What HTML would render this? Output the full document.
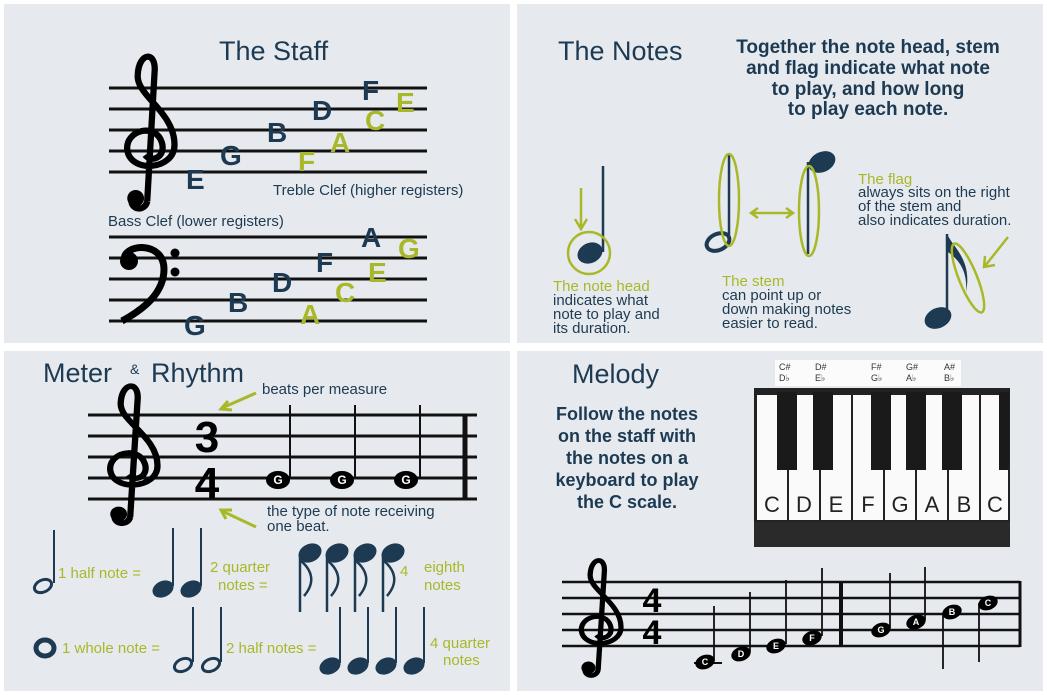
<!DOCTYPE html>
<html><head><meta charset="utf-8"><style>
html,body{margin:0;padding:0;background:#fff;}
svg{display:block}
text{font-family:"Liberation Sans",sans-serif}
.n{fill:#1d3a52}.g{fill:#a9b829}
.h{font-size:27px;fill:#1d3a52}
.L text{font-weight:bold;font-size:28px}
.s{font-size:15px;fill:#1d3a52}
.gs{font-size:15px;fill:#a9b829}
.b{font-weight:bold;fill:#1d3a52}
</style></head><body>
<svg width="1047" height="695" viewBox="0 0 1047 695" xmlns="http://www.w3.org/2000/svg">
<defs>
<g id="tc"><path d="M24 145 L31 20 C33 -2 16 0 15 22 C13 42 50 58 50 90 C50 115 8 118 5 95 C3 76 32 68 38 88 C42 102 28 108 22 100 M24 145 C22 155 8 154 9 143" fill="none" stroke="#000" stroke-width="6"/><circle cx="13" cy="142" r="8"/></g>
<g id="bc"><path d="M4 15 C4 -2 44 -4 44 24 C44 48 24 64 2 76" fill="none" stroke="#000" stroke-width="7"/><circle cx="9" cy="16" r="9"/><circle cx="55" cy="8" r="4.5"/><circle cx="55" cy="27" r="4.5"/></g>
</defs>
<rect width="1047" height="695" fill="#fff"/>
<rect x="4" y="4" width="506" height="339" fill="#e6eaee"/>
<rect x="517" y="4" width="526" height="339" fill="#e6eaee"/>
<rect x="4" y="351" width="506" height="340" fill="#e6eaee"/>
<rect x="517" y="351" width="526" height="340" fill="#e6eaee"/>

<text x="219" y="60" class="h">The Staff</text>
<g stroke="#111" stroke-width="3"><line x1="109" y1="88" x2="427" y2="88"/><line x1="109" y1="109" x2="427" y2="109"/><line x1="109" y1="130" x2="427" y2="130"/><line x1="109" y1="151" x2="427" y2="151"/><line x1="109" y1="172" x2="427" y2="172"/>
<line x1="109" y1="237" x2="427" y2="237"/><line x1="109" y1="258" x2="427" y2="258"/><line x1="109" y1="279" x2="427" y2="279"/><line x1="109" y1="300" x2="427" y2="300"/><line x1="109" y1="321" x2="427" y2="321"/></g>
<use href="#tc" transform="translate(122,52) scale(1.05,1.03)"/>
<use href="#bc" transform="translate(120,245)"/>
<g class="L">
<text x="186" y="189" class="n" font-weight="bold">E</text><text x="220" y="165" class="n" font-weight="bold">G</text><text x="267" y="142" class="n" font-weight="bold">B</text><text x="312" y="120" class="n" font-weight="bold">D</text><text x="362" y="100" class="n" font-weight="bold">F</text>
<text x="298" y="171" class="g" font-weight="bold">F</text><text x="330" y="152" class="g" font-weight="bold">A</text><text x="365" y="130" class="g" font-weight="bold">C</text><text x="396" y="112" class="g" font-weight="bold">E</text>
<text x="184" y="335" class="n" font-weight="bold">G</text><text x="228" y="312" class="n" font-weight="bold">B</text><text x="272" y="292" class="n" font-weight="bold">D</text><text x="316" y="272" class="n" font-weight="bold">F</text><text x="361" y="247" class="n" font-weight="bold">A</text>
<text x="300" y="324" class="g" font-weight="bold">A</text><text x="335" y="302" class="g" font-weight="bold">C</text><text x="368" y="282" class="g" font-weight="bold">E</text><text x="398" y="258" class="g" font-weight="bold">G</text>
</g>
<text x="273" y="195" class="s">Treble Clef (higher registers)</text>
<text x="108" y="226" class="s">Bass Clef (lower registers)</text>

<text x="558" y="60" class="h">The Notes</text>
<g class="b" font-size="19" text-anchor="middle"><text x="868" y="53">Together the note head, stem</text><text x="868" y="74">and flag indicate what note</text><text x="868" y="95">to play, and how long</text><text x="868" y="115">to play each note.</text></g>
<line x1="603" y1="166" x2="603" y2="252" stroke="#1d3a52" stroke-width="2.5"/>
<ellipse cx="590" cy="253" rx="13" ry="10" transform="rotate(-25 590 253)" class="n"/>
<circle cx="589" cy="253" r="21" fill="none" stroke="#a9b829" stroke-width="2.5"/>
<path d="M581 188 V228 M575 219 L581 229 L587 219" stroke="#a9b829" stroke-width="2.5" fill="none"/>
<text x="553" y="291" class="gs">The note head</text>
<text x="553" y="305" class="s">indicates what</text><text x="553" y="319" class="s">note to play and</text><text x="553" y="333" class="s">its duration.</text>
<line x1="729" y1="155" x2="729" y2="236" stroke="#1d3a52" stroke-width="2.5"/>
<ellipse cx="718" cy="242" rx="12" ry="8" transform="rotate(-25 718 242)" fill="none" stroke="#1d3a52" stroke-width="4"/>
<ellipse cx="729" cy="200" rx="10" ry="46" fill="none" stroke="#a9b829" stroke-width="2.5"/>
<path d="M752 213 H792 M758 208 L751 213 L758 218 M786 208 L793 213 L786 218" stroke="#a9b829" stroke-width="2.5" fill="none"/>
<line x1="808" y1="162" x2="808" y2="254" stroke="#1d3a52" stroke-width="2.5"/>
<ellipse cx="822" cy="162" rx="14" ry="10" transform="rotate(-25 822 162)" class="n"/>
<ellipse cx="809" cy="211" rx="10" ry="45" fill="none" stroke="#a9b829" stroke-width="2.5"/>
<text x="722" y="286" class="gs">The stem</text>
<text x="722" y="300" class="s">can point up or</text><text x="722" y="314" class="s">down making notes</text><text x="722" y="328" class="s">easier to read.</text>
<line x1="947" y1="234" x2="947" y2="316" stroke="#1d3a52" stroke-width="2.5"/>
<ellipse cx="938" cy="318" rx="14" ry="10" transform="rotate(-25 938 318)" class="n"/>
<path d="M948 236 C956 250 972 262 966 292 C968 268 956 258 948 252 Z" class="n"/>
<ellipse cx="968" cy="278" rx="9" ry="37" transform="rotate(-22 968 278)" fill="none" stroke="#a9b829" stroke-width="2.5"/>
<path d="M1008 237 L985 266 M985 256 L984 267 L995 265" stroke="#a9b829" stroke-width="2.5" fill="none"/>
<text x="858" y="184" class="gs">The flag</text>
<text x="858" y="197" class="s">always sits on the right</text><text x="858" y="211" class="s">of the stem and</text><text x="858" y="225" class="s">also indicates duration.</text>

<text x="43" y="382" class="h">Meter</text><text x="130" y="374" font-size="14" class="n">&amp;</text><text x="151" y="382" class="h">Rhythm</text>
<g stroke="#111" stroke-width="3"><line x1="88" y1="415" x2="477" y2="415"/><line x1="88" y1="436" x2="477" y2="436"/><line x1="88" y1="457" x2="477" y2="457"/><line x1="88" y1="478" x2="477" y2="478"/><line x1="88" y1="499" x2="477" y2="499"/></g>
<line x1="465" y1="414" x2="465" y2="500" stroke="#111" stroke-width="5"/>
<use href="#tc" transform="translate(105,382) scale(1.05,0.93)"/>
<g font-family="Liberation Serif" font-weight="bold" font-size="44" text-anchor="middle"><text x="207" y="452">3</text><text x="207" y="498">4</text></g>
<g stroke="#111" stroke-width="2"><line x1="290" y1="405" x2="290" y2="478"/><line x1="355" y1="405" x2="355" y2="478"/><line x1="420" y1="405" x2="420" y2="478"/></g>
<g><ellipse cx="278" cy="480" rx="12" ry="9"/><ellipse cx="342" cy="480" rx="12" ry="9"/><ellipse cx="406" cy="480" rx="12" ry="9"/></g>
<g fill="#fff" font-weight="bold" font-size="12" text-anchor="middle"><text x="278" y="484">G</text><text x="342" y="484">G</text><text x="406" y="484">G</text></g>
<path d="M256 393 L222 408 M228 401 L221 409 L232 410" stroke="#a9b829" stroke-width="3" fill="none"/>
<path d="M256 527 L222 511 M232 510 L221 510 L226 519" stroke="#a9b829" stroke-width="3" fill="none"/>
<text x="262" y="394" class="s">beats per measure</text>
<text x="267" y="516" class="s">the type of note receiving</text><text x="267" y="531" class="s">one beat.</text>
<line x1="54" y1="530" x2="54" y2="583" stroke="#1d3a52" stroke-width="2"/>
<ellipse cx="43" cy="586" rx="9" ry="6" transform="rotate(-25 43 586)" fill="none" stroke="#1d3a52" stroke-width="3"/>
<text x="58" y="578" class="gs">1 half note =</text>
<g stroke="#1d3a52" stroke-width="2"><line x1="173" y1="528" x2="173" y2="586"/><line x1="201" y1="528" x2="201" y2="586"/></g>
<ellipse cx="163" cy="589" rx="11" ry="8" transform="rotate(-25 163 589)" class="n"/><ellipse cx="191" cy="589" rx="11" ry="8" transform="rotate(-25 191 589)" class="n"/>
<text x="210" y="572" class="gs">2 quarter</text><text x="218" y="590" class="gs">notes =</text>
<g class="n">
<ellipse cx="310" cy="553" rx="12" ry="9" transform="rotate(-25 310 553)"/><ellipse cx="337" cy="553" rx="12" ry="9" transform="rotate(-25 337 553)"/><ellipse cx="365" cy="553" rx="12" ry="9" transform="rotate(-25 365 553)"/><ellipse cx="393" cy="553" rx="12" ry="9" transform="rotate(-25 393 553)"/>
</g>
<g stroke="#1d3a52" stroke-width="2.5" fill="none">
<path d="M300 556 V612 M300 560 C312 570 316 582 304 596"/><path d="M327 556 V612 M327 560 C339 570 343 582 331 596"/><path d="M355 556 V612 M355 560 C367 570 371 582 359 596"/><path d="M383 556 V612 M383 560 C395 570 399 582 387 596"/>
</g>
<text x="400" y="576" class="gs">4</text><text x="424" y="572" class="gs">eighth</text><text x="424" y="590" class="gs">notes</text>
<ellipse cx="45" cy="648" rx="9" ry="8" fill="none" stroke="#1d3a52" stroke-width="5"/>
<text x="62" y="653" class="gs">1 whole note =</text>
<g stroke="#1d3a52" stroke-width="2"><line x1="193" y1="607" x2="193" y2="662"/><line x1="221" y1="607" x2="221" y2="662"/></g>
<ellipse cx="183" cy="665" rx="9" ry="6" transform="rotate(-25 183 665)" fill="none" stroke="#1d3a52" stroke-width="3"/><ellipse cx="211" cy="665" rx="9" ry="6" transform="rotate(-25 211 665)" fill="none" stroke="#1d3a52" stroke-width="3"/>
<text x="226" y="653" class="gs">2 half notes =</text>
<g stroke="#1d3a52" stroke-width="2"><line x1="340" y1="607" x2="340" y2="663"/><line x1="368" y1="607" x2="368" y2="663"/><line x1="396" y1="607" x2="396" y2="663"/><line x1="424" y1="607" x2="424" y2="663"/></g>
<g class="n"><ellipse cx="330" cy="666" rx="11" ry="8" transform="rotate(-25 330 666)"/><ellipse cx="358" cy="666" rx="11" ry="8" transform="rotate(-25 358 666)"/><ellipse cx="386" cy="666" rx="11" ry="8" transform="rotate(-25 386 666)"/><ellipse cx="414" cy="666" rx="11" ry="8" transform="rotate(-25 414 666)"/></g>
<text x="430" y="648" class="gs">4 quarter</text><text x="443" y="665" class="gs">notes</text>

<text x="572" y="383" class="h">Melody</text>
<g class="b" font-size="18" text-anchor="middle"><text x="627" y="420">Follow the notes</text><text x="627" y="442">on the staff with</text><text x="627" y="464">the notes on a</text><text x="627" y="486">keyboard to play</text><text x="627" y="508">the C scale.</text></g>
<rect x="775" y="360" width="186" height="26" fill="#fbfbfb"/>
<g font-size="9" fill="#333"><text x="779" y="370">C#</text><text x="779" y="381">D♭</text><text x="815" y="370">D#</text><text x="815" y="381">E♭</text><text x="871" y="370">F#</text><text x="871" y="381">G♭</text><text x="906" y="370">G#</text><text x="906" y="381">A♭</text><text x="944" y="370">A#</text><text x="944" y="381">B♭</text></g>
<rect x="754" y="388" width="256" height="159" fill="#222"/>
<g fill="#fafafa"><rect x="757" y="395" width="30" height="125"/><rect x="789" y="395" width="30" height="125"/><rect x="821" y="395" width="30" height="125"/><rect x="853" y="395" width="30" height="125"/><rect x="885" y="395" width="30" height="125"/><rect x="917" y="395" width="30" height="125"/><rect x="949" y="395" width="30" height="125"/><rect x="981" y="395" width="27" height="125"/></g>
<g fill="#1a1a1a"><rect x="777" y="392" width="20" height="78"/><rect x="813" y="392" width="20" height="78"/><rect x="871" y="392" width="20" height="78"/><rect x="906" y="392" width="20" height="78"/><rect x="942" y="392" width="20" height="78"/><rect x="999" y="392" width="10" height="78"/></g>
<rect x="754" y="522" width="256" height="25" fill="#2a2a2a"/>
<g font-size="22" fill="#222" text-anchor="middle"><text x="772" y="512">C</text><text x="804" y="512">D</text><text x="836" y="512">E</text><text x="868" y="512">F</text><text x="900" y="512">G</text><text x="932" y="512">A</text><text x="964" y="512">B</text><text x="995" y="512">C</text></g>
<g stroke="#111" stroke-width="2.5"><line x1="562" y1="582" x2="1020" y2="582"/><line x1="562" y1="598" x2="1020" y2="598"/><line x1="562" y1="614" x2="1020" y2="614"/><line x1="562" y1="630" x2="1020" y2="630"/><line x1="562" y1="646" x2="1020" y2="646"/></g>
<line x1="841" y1="581" x2="841" y2="647" stroke="#111" stroke-width="4"/><line x1="1020" y1="581" x2="1020" y2="647" stroke="#111" stroke-width="3"/>
<use href="#tc" transform="translate(577,557) scale(0.88,0.78)"/>
<g font-family="Liberation Serif" font-weight="bold" font-size="34" text-anchor="middle"><text x="652" y="612">4</text><text x="652" y="644">4</text></g>
<line x1="694" y1="663" x2="722" y2="663" stroke="#111" stroke-width="2"/>
<g stroke="#111" stroke-width="1.8"><line x1="714" y1="606" x2="714" y2="661"/><line x1="750" y1="592" x2="750" y2="652"/><line x1="786" y1="580" x2="786" y2="644"/><line x1="822" y1="568" x2="822" y2="636"/><line x1="890" y1="573" x2="890" y2="628"/><line x1="925" y1="567" x2="925" y2="620"/><line x1="943" y1="613" x2="943" y2="669"/><line x1="979" y1="603" x2="979" y2="662"/></g>
<g><ellipse cx="705" cy="662" rx="10" ry="7" transform="rotate(-20 705 662)"/><ellipse cx="741" cy="654" rx="10" ry="7" transform="rotate(-20 741 654)"/><ellipse cx="776" cy="646" rx="10" ry="7" transform="rotate(-20 776 646)"/><ellipse cx="812" cy="638" rx="10" ry="7" transform="rotate(-20 812 638)"/><ellipse cx="881" cy="630" rx="10" ry="7" transform="rotate(-20 881 630)"/><ellipse cx="916" cy="622" rx="10" ry="7" transform="rotate(-20 916 622)"/><ellipse cx="952" cy="612" rx="10" ry="7" transform="rotate(-20 952 612)"/><ellipse cx="988" cy="603" rx="10" ry="7" transform="rotate(-20 988 603)"/></g>
<g fill="#fff" font-weight="bold" font-size="9" text-anchor="middle"><text x="705" y="665">C</text><text x="741" y="657">D</text><text x="776" y="649">E</text><text x="812" y="641">F</text><text x="881" y="633">G</text><text x="916" y="625">A</text><text x="952" y="615">B</text><text x="988" y="606">C</text></g>
</svg>
</body></html>
